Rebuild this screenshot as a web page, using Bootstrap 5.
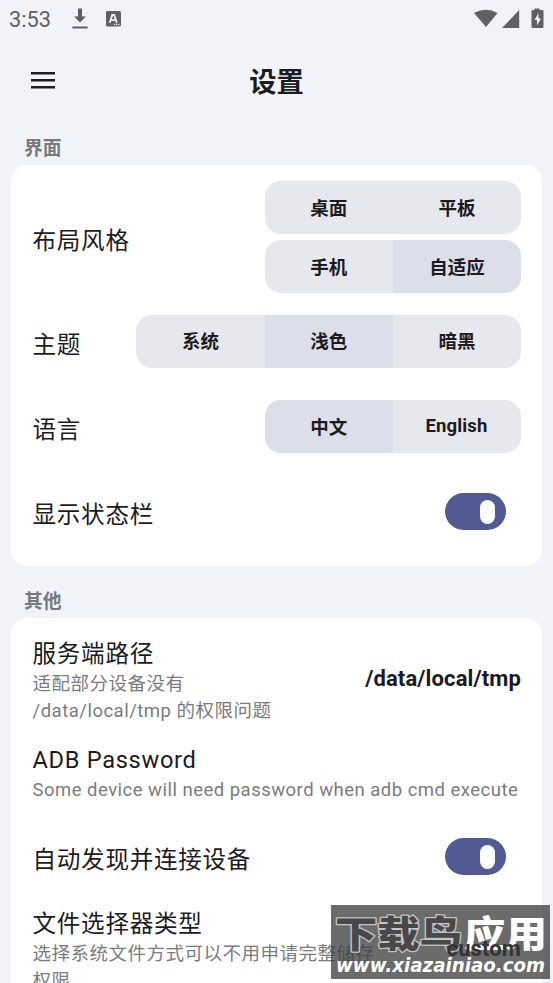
<!DOCTYPE html>
<html lang="zh-CN">
<head>
<meta charset="utf-8">
<meta name="viewport" content="width=device-width, initial-scale=1">
<title>设置</title>
<link href="https://cdn.jsdelivr.net/npm/bootstrap@5.3.0/dist/css/bootstrap.min.css" rel="stylesheet">
<style>
html,body{height:983px;overflow:hidden}
body{background:#f2f3f9;color:#1b1b21;font-family:Roboto,"Noto Sans CJK SC",sans-serif;position:relative}
.statusbar{height:38px;padding:0 9px;color:#5f6063}
.clock{font-size:21.8px;line-height:38px;padding-top:1px;width:59px}
.gap-app{margin-left:18px}
.topbar{height:85px;padding-left:31px}
.page-title{font-size:27.3px;font-weight:700;line-height:40px;margin:0;padding:4px 55px 0 0}
.section-title{height:42px;padding:14px 0 0 24px;font-size:18.8px;line-height:25px;font-weight:700;color:#77787d}
.sec2{height:52.5px;padding-top:24.5px}
.panel{margin:0 11px;background:#fff;border-radius:16px;padding:11px 21px 11px 21.5px}
.row-a{height:122.5px}.row-b{height:85.4px}
.lbl{font-size:23.6px;letter-spacing:.7px;line-height:29px}
.lbl-mid{padding-top:8px}
.sub{font-size:18.5px;letter-spacing:.5px;line-height:27.5px;color:#7b7b7e}
.sub-latin{letter-spacing:.48px}
.seg{height:53px;border-radius:16px;overflow:hidden;background:#e7e8ee}
.seg+.seg{margin-top:6px}
.seg>span{width:128.2px;font-size:18.5px;font-weight:700;padding:4px 0 0 0}
.seg>.latin{padding:0 1px 0 0;letter-spacing:.15px}
.seg>.on{background:#dcdeea}
.toggle{width:61px;height:37px;border-radius:19px;background:#515b92;margin:0 15px 0 0;padding-right:11px}
.toggle i{width:15px;height:24px;border-radius:8px;background:#fff}
.val{font-size:22px;font-weight:700;letter-spacing:.12px;line-height:28px;padding-top:1px}
.panel2{height:365px;padding-bottom:0;border-radius:16px 16px 0 0;overflow:hidden}
.row-path{height:99px}
.row-path .lbl{padding-top:8px;height:39px}
.row-pass{height:86px;padding-top:18px}
.row-pass .sub{padding-top:1.5px}
.row-file{height:84px;padding-top:10.500px}
.row-file .sub{padding-top:2px;line-height:26.500px}
.row-file .val{position:relative;z-index:3;color:#333336;padding-top:25px}
.wm{position:absolute;z-index:2;left:331px;top:905px;width:219px;height:74px;background:rgba(62,62,62,.77)}
</style>
</head>
<body>
<header class="statusbar d-flex align-items-center">
  <span class="clock">3:53</span>
  <svg class="ms-1" width="16" height="22" viewBox="0 0 16 22"><path d="M6 .5h4v8h4l-6 6-6-6h4zM.5 18.500h15v2H.5z" fill="#5f6063"/></svg>
  <svg class="gap-app" width="15" height="17" viewBox="0 0 15 17"><rect y="0" width="15" height="15.500" rx="1.500" fill="#5f6063"/><path d="M3.700 11.700 6.300 4h1.900l2.600 7.700M4.800 9.200h4.900" fill="none" stroke="#f2f3f9" stroke-width="1.800"/><path d="M8 13.500h1.200M10.200 13.500h1.200M12.300 13.500h1.200" stroke="#f2f3f9" stroke-width="1.300"/></svg>
  <svg class="ms-auto" width="70" height="22" viewBox="0 0 70 22"><g fill="#5f6063"><path d="M0 4.900Q12-1.400 23.600 4.900L12 19z"/><path d="M45.200 2v18H28z"/><path d="M60.500 2V.5h5V2h2.700q1.300 0 1.300 1.300v15.400q0 1.300-1.300 1.300h-9.400q-1.300 0-1.300-1.300V3.300q0-1.300 1.300-1.300z"/></g><path d="M64.500 5 60.500 12h2.500v5.500l4-7h-2.500z" fill="#f2f3f9"/></svg>
</header>
<nav class="topbar d-flex align-items-center">
  <svg width="24" height="17" viewBox="0 0 24 17"><path d="M0 1.300h24M0 8.300h24M0 15.300h24" stroke="#1b1b21" stroke-width="2.500"/></svg>
  <h1 class="page-title flex-fill text-center">设置</h1>
</nav>
<main>
  <div class="section-title">界面</div>
  <section class="panel">
    <div class="row-a d-flex align-items-center justify-content-between">
      <div class="lbl lbl-mid">布局风格</div>
      <div class="d-flex flex-column">
        <div class="seg d-flex"><span class="d-flex align-items-center justify-content-center">桌面</span><span class="d-flex align-items-center justify-content-center">平板</span></div>
        <div class="seg d-flex"><span class="d-flex align-items-center justify-content-center">手机</span><span class="on d-flex align-items-center justify-content-center">自适应</span></div>
      </div>
    </div>
    <div class="row-b d-flex align-items-center justify-content-between">
      <div class="lbl lbl-mid">主题</div>
      <div class="seg d-flex"><span class="d-flex align-items-center justify-content-center">系统</span><span class="on d-flex align-items-center justify-content-center">浅色</span><span class="d-flex align-items-center justify-content-center">暗黑</span></div>
    </div>
    <div class="row-b d-flex align-items-center justify-content-between">
      <div class="lbl lbl-mid">语言</div>
      <div class="seg d-flex"><span class="on d-flex align-items-center justify-content-center">中文</span><span class="latin d-flex align-items-center justify-content-center">English</span></div>
    </div>
    <div class="row-b d-flex align-items-center justify-content-between">
      <div class="lbl lbl-mid">显示状态栏</div>
      <div class="toggle d-flex align-items-center justify-content-end"><i></i></div>
    </div>
  </section>
  <div class="section-title sec2">其他</div>
  <section class="panel panel2">
    <div class="row-path d-flex align-items-center justify-content-between">
      <div><div class="lbl">服务端路径</div><div class="sub">适配部分设备没有<br>/data/local/tmp 的权限问题</div></div>
      <div class="val">/data/local/tmp</div>
    </div>
    <div class="row-pass">
      <div class="lbl">ADB Password</div>
      <div class="sub sub-latin text-nowrap">Some device will need password when adb cmd execute</div>
    </div>
    <div class="row-b d-flex align-items-center justify-content-between">
      <div class="lbl lbl-mid">自动发现并连接设备</div>
      <div class="toggle d-flex align-items-center justify-content-end"><i></i></div>
    </div>
    <div class="row-file d-flex align-items-start justify-content-between">
      <div><div class="lbl">文件选择器类型</div><div class="sub text-nowrap">选择系统文件方式可以不用申请完整储存<br>权限</div></div>
      <div class="val">custom</div>
    </div>
  </section>
</main>
<div class="wm">
  <svg class="d-block" width="219" height="74" viewBox="0 0 219 74">
    <g font-family="'Noto Sans CJK SC',sans-serif" font-size="37" font-weight="900" stroke-linejoin="round" paint-order="stroke">
      <text x="4" y="43" textLength="127" lengthAdjust="spacingAndGlyphs" fill="#484848" stroke="#c4c4c4" stroke-width="2.500">下载鸟</text>
      <text x="133" y="43" textLength="83" lengthAdjust="spacingAndGlyphs" fill="#fff">应用</text>
    </g>
    <text x="5" y="67" textLength="209" lengthAdjust="spacingAndGlyphs" font-family="'DejaVu Sans',sans-serif" font-size="19" font-weight="700" font-style="italic" fill="#fff">www.xiazainiao.com</text>
  </svg>
</div>
<script src="https://cdn.jsdelivr.net/npm/bootstrap@5.3.0/dist/js/bootstrap.bundle.min.js"></script>
</body>
</html>
